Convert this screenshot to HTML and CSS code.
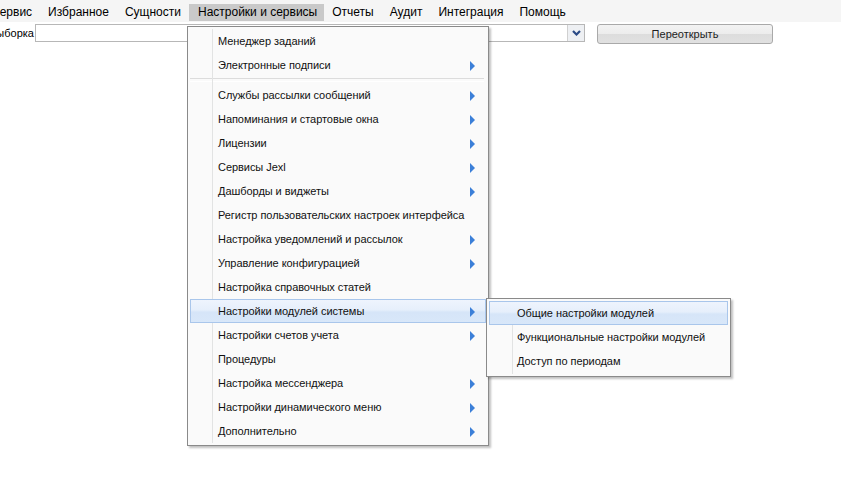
FILE: index.html
```html
<!DOCTYPE html>
<html lang="ru">
<head>
<meta charset="utf-8">
<title>Menu</title>
<link rel="stylesheet" href="styles.css">
</head>
<body>
<div class="page">
  <nav class="menubar">
    <span class="mb-item">Сервис</span>
    <span class="mb-item">Избранное</span>
    <span class="mb-item">Сущности</span>
    <span class="mb-item active">Настройки и сервисы</span>
    <span class="mb-item">Отчеты</span>
    <span class="mb-item">Аудит</span>
    <span class="mb-item">Интеграция</span>
    <span class="mb-item">Помощь</span>
  </nav>
  <div class="toolbar">
    <span class="label">Выборка</span>
    <div class="combo">
      <div class="combo-input"></div>
      <div class="combo-btn">
        <svg width="9" height="6" viewBox="0 0 9 6"><path d="M1 1 L4.5 4.5 L8 1" fill="none" stroke="#2b4a86" stroke-width="2.2"/></svg>
      </div>
    </div>
    <button class="btn">Переоткрыть</button>
  </div>

  <div class="menu main-menu">
    <div class="mi"><span>Менеджер заданий</span></div>
    <div class="mi sub"><span>Электронные подписи</span><i class="arr"></i></div>
    <div class="sep"></div>
    <div class="mi sub"><span>Службы рассылки сообщений</span><i class="arr"></i></div>
    <div class="mi sub"><span>Напоминания и стартовые окна</span><i class="arr"></i></div>
    <div class="mi sub"><span>Лицензии</span><i class="arr"></i></div>
    <div class="mi sub"><span>Сервисы Jexl</span><i class="arr"></i></div>
    <div class="mi sub"><span>Дашборды и виджеты</span><i class="arr"></i></div>
    <div class="mi"><span>Регистр пользовательских настроек интерфейса</span></div>
    <div class="mi sub"><span>Настройка уведомлений и рассылок</span><i class="arr"></i></div>
    <div class="mi sub"><span>Управление конфигурацией</span><i class="arr"></i></div>
    <div class="mi"><span>Настройка справочных статей</span></div>
    <div class="mi sub hl"><span>Настройки модулей системы</span><i class="arr"></i></div>
    <div class="mi sub"><span>Настройки счетов учета</span><i class="arr"></i></div>
    <div class="mi"><span>Процедуры</span></div>
    <div class="mi sub"><span>Настройка мессенджера</span><i class="arr"></i></div>
    <div class="mi sub"><span>Настройки динамического меню</span><i class="arr"></i></div>
    <div class="mi sub"><span>Дополнительно</span><i class="arr"></i></div>
  </div>

  <div class="menu sub-menu">
    <div class="mi hl"><span>Общие настройки модулей</span></div>
    <div class="mi"><span>Функциональные настройки модулей</span></div>
    <div class="mi"><span>Доступ по периодам</span></div>
  </div>
</div>
</body>
</html>
```
FILE: styles.css
```css
* { box-sizing: border-box; }
html, body { margin: 0; padding: 0; background: #fff; overflow: hidden; }
body {
  font-family: "Liberation Sans", Arial, sans-serif;
  font-size: 12px;
  color: #000;
  width: 841px;
  height: 477px;
}
.page { position: relative; width: 841px; height: 477px; }

.menubar {
  display: flex;
  height: 22px;
  background: #f5f5f5;
  padding-top: 4px;
  margin-left: -17px;
  font-size: 12px;
}
.mb-item {
  height: 17px;
  line-height: 16px;
  padding: 0 8px;
}
.mb-item.active {
  background: #c9c9c9;
  padding: 0 7px 0 9px;
}

.toolbar {
  display: flex;
  align-items: flex-start;
  padding-top: 2px;
  margin-left: -11px;
  font-size: 11px;
}
.label { width: 46px; line-height: 18px; }
.combo { display: flex; width: 550px; height: 18px; border: 1px solid #b7b7b7; }
.combo-input { flex: 1; background: #fff; }
.combo-btn {
  width: 17px;
  border-left: 1px solid #d0d0d0;
  background: #eef0f3;
  display: flex;
  align-items: center;
  justify-content: center;
}
.btn {
  margin-left: 12px;
  width: 176px;
  height: 20px;
  border: 1px solid #a9a9a9;
  border-radius: 3px;
  background: linear-gradient(#f3f3f3 0%, #ececec 50%, #dcdcdc 51%, #e1e1e1 100%);
  font-family: "Liberation Sans", Arial, sans-serif;
  font-size: 11px;
  color: #1d1d1d;
  padding: 0;
}

.menu {
  position: absolute;
  background: #fafafa;
  border: 1px solid #8a8a8a;
  box-shadow: 2px 2px 2px rgba(0,0,0,0.25);
  padding: 2px;
  font-size: 11px;
  color: #111;
  letter-spacing: -0.05px;
}
.menu::before {
  content: "";
  position: absolute;
  top: 2px; bottom: 2px;
  width: 1px;
  background: #e2e3e3;
}
.main-menu { left: 187px; top: 26px; width: 302px; height: 420px; }
.main-menu::before { left: 24px; }
.sub-menu { left: 486px; top: 298px; width: 245px; height: 79px; }
.sub-menu::before { left: 25px; }

.mi {
  position: relative;
  display: flex;
  align-items: center;
  height: 24px;
  border: 1px solid transparent;
  padding-left: 27px;
}
.mi.hl {
  border-color: #a9c6eb;
  background: linear-gradient(#eef4fd 0%, #e6effb 45%, #d6e5f8 55%, #d8e7f9 100%);
}
.arr {
  position: absolute;
  right: 10px;
  top: 7px;
  width: 0; height: 0;
  border-top: 5px solid transparent;
  border-bottom: 5px solid transparent;
  border-left: 5px solid #3b7fd8;
}
.sep {
  height: 6px;
  margin-right: 2px;
  display: flex;
  align-items: center;
}
.sep::after { content: ""; display: block; width: 100%; height: 2px; border-top: 1px solid #dcdcdc; border-bottom: 1px solid #fff; }
```
